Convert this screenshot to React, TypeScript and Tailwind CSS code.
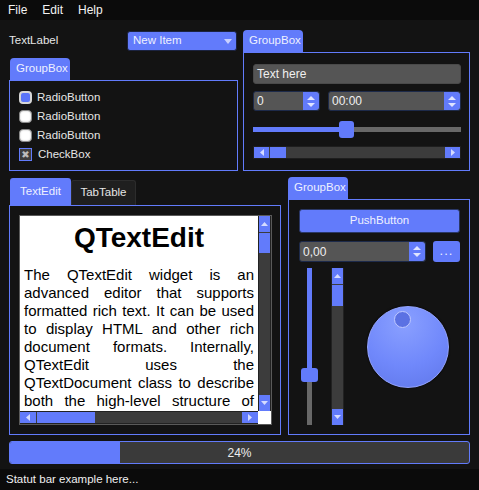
import React from "react";

type Dir = "up" | "down" | "left" | "right";

const Arrow = ({ dir, w = 8, h = 4, className = "" }: { dir: Dir; w?: number; h?: number; className?: string }) => {
  const vertical = dir === "up" || dir === "down";
  const vw = vertical ? w : h;
  const vh = vertical ? h : w;
  const pts = {
    up: `0,${vh} ${vw / 2},0 ${vw},${vh}`,
    down: `0,0 ${vw},0 ${vw / 2},${vh}`,
    left: `${vw},0 ${vw},${vh} 0,${vh / 2}`,
    right: `0,0 0,${vh} ${vw},${vh / 2}`,
  }[dir];
  return (
    <svg width={vw} height={vh} viewBox={`0 0 ${vw} ${vh}`} className={className}>
      <polygon points={pts} fill="currentColor" />
    </svg>
  );
};

const ScrollBtn = ({ dir, className = "" }: { dir: Dir; className?: string }) => (
  <div className={`bg-[#627bfb] flex items-center justify-center text-[#d5dbff] ${className}`}>
    <Arrow dir={dir} w={7} h={4} />
  </div>
);

const SpinButtons = () => (
  <div className="w-[16px] h-full bg-[#627bfb] rounded-r-[3px] flex flex-col items-center justify-center gap-[3px] text-[#dfe4ff]">
    <Arrow dir="up" w={8} h={4} />
    <Arrow dir="down" w={8} h={4} />
  </div>
);

const SpinBox = ({ value, className = "" }: { value: string; className?: string }) => (
  <div className={`flex h-full bg-[#555555] border border-[#1d2a4a] rounded-[3px] overflow-hidden ${className}`}>
    <div className="flex-1 flex items-center pl-[3px] text-[12px] text-[#f0f0f0]">{value}</div>
    <SpinButtons />
  </div>
);

const GroupTab = ({ className = "" }: { className?: string }) => (
  <div className={`h-[22px] bg-[#627bfb] rounded-t-[4px] flex items-center pl-[6px] text-[11.5px] text-[#eef0ff] ${className}`}>
    GroupBox
  </div>
);

const Radio = ({ checked }: { checked?: boolean }) =>
  checked ? (
    <div className="w-[13px] h-[13px] rounded-[4px] border-2 border-[#d6d6d6] bg-[#5a74f8]" />
  ) : (
    <div className="w-[13px] h-[13px] rounded-[4px] border border-[#8a8a8a] bg-white shadow-[inset_0_0_2px_#bbbbbb]" />
  );

const lines = [
  "The QTextEdit widget is an",
  "advanced editor that supports",
  "formatted rich text. It can be used",
  "to display HTML and other rich",
  "document formats. Internally,",
  "QTextEdit uses the",
  "QTextDocument class to describe",
  "both the high-level structure of",
];

export default function App() {
  return (
    <div className="w-[479px] h-[490px] bg-[#131313] text-[#e6e6e6] font-['Liberation_Sans',Arial,sans-serif] text-[11.5px] flex flex-col overflow-hidden">
      {/* menu bar */}
      <div className="h-[20px] bg-[#0b0b0b] flex items-center gap-[15px] pl-[8px] text-[12px] text-[#f2f2f2]">
        <span>File</span>
        <span>Edit</span>
        <span>Help</span>
      </div>

      <div className="flex-1 flex flex-col px-[9px] pt-[10px]">
        {/* top section */}
        <div className="flex gap-[5px] h-[141px]">
          <div className="w-[229px] flex flex-col">
            <div className="h-[20px] mt-[1px] flex items-center justify-between pr-[1px]">
              <span>TextLabel</span>
              <div className="w-[110px] h-full bg-[#627bfb] border border-[#1b2340] rounded-[3px] flex items-center justify-between pl-[5px] pr-[4px] text-[#eef0ff]">
                <span>New Item</span>
                <Arrow dir="down" w={8} h={5} className="text-[#c9d1ff]" />
              </div>
            </div>
            <GroupTab className="mt-[7px] ml-[1px] w-[60px]" />
            <div className="h-[91px] border border-[#627bfb] pt-[7px] pl-[9px] flex flex-col">
              {[true, false, false].map((c, i) => (
                <div key={i} className="h-[19px] flex items-center gap-[5px]">
                  <Radio checked={c} />
                  <span>RadioButton</span>
                </div>
              ))}
              <div className="h-[19px] flex items-center gap-[6px]">
                <div className="w-[13px] h-[13px] border border-[#627bfb] bg-[#3d3d3d] flex items-center justify-center text-[#bdbdbd] text-[10px] leading-none font-['DejaVu_Sans',sans-serif]">
                  ✖
                </div>
                <span>CheckBox</span>
              </div>
            </div>
          </div>

          <div className="w-[227px] flex flex-col">
            <GroupTab className="w-[60px]" />
            <div className="h-[119px] border border-[#627bfb] pt-[11px] pl-[9px] pr-[8px] flex flex-col">
              <div className="h-[20px] bg-[#555555] border border-[#4a4a4a] rounded-[3px] flex items-center pl-[3px] text-[12px] text-[#f0f0f0]">
                Text here
              </div>
              <div className="h-[20px] mt-[7px] flex gap-[8px]">
                <SpinBox value="0" className="w-[67px]" />
                <SpinBox value="00:00" className="w-[133px]" />
              </div>
              <div className="relative h-[17px] mt-[10px] flex items-center">
                <div className="h-[5px] flex-1 flex">
                  <div className="w-[93px] bg-[#627bfb]" />
                  <div className="flex-1 bg-[#686868]" />
                </div>
                <div className="absolute left-[86px] top-0 w-[15px] h-[17px] rounded-[3px] bg-[#627bfb]" />
              </div>
              <div className="h-[13px] mt-[8px] flex bg-[#3c3c3c] border border-[#1e1e1e]">
                <ScrollBtn dir="left" className="w-[15px]" />
                <div className="flex-1 pl-[1px] flex">
                  <div className="w-[16px] bg-[#627bfb]" />
                </div>
                <ScrollBtn dir="right" className="w-[15px]" />
              </div>
            </div>
          </div>
        </div>

        {/* bottom section */}
        <div className="flex gap-[7px] h-[258px] mt-[6px]">
          <div className="w-[272px] flex flex-col pt-[1px]">
            <div className="h-[27px] flex items-end pl-[1px]">
              <div className="w-[61px] h-[27px] bg-[#627bfb] rounded-t-[3px] flex items-center justify-center text-[#eef0ff]">
                TextEdit
              </div>
              <div className="w-[65px] h-[25px] bg-[#1f1f1f] border border-[#2c2c2c] border-b-0 rounded-t-[3px] flex items-center justify-center">
                TabTable
              </div>
            </div>
            <div className="h-[230px] border border-[#627bfb] pt-[9px] pl-[9px]">
              <div className="w-[253px] h-[210px] border border-[#5a5a5a] grid grid-cols-[238px_13px] grid-rows-[195px_13px] bg-white">
                <div className="overflow-hidden bg-white text-black">
                  <div className="pt-[6px] h-[38px] text-center text-[28px] leading-[32px] font-bold">QTextEdit</div>
                  <div className="mt-[12px] px-[4px] text-[15px] leading-[18px]">
                    {lines.map((l, i) => (
                      <div key={i} className="text-justify [text-align-last:justify] whitespace-nowrap">
                        {l}
                      </div>
                    ))}
                  </div>
                </div>
                <div className="flex flex-col bg-[#3c3c3c] border-x border-[#222]">
                  <ScrollBtn dir="up" className="h-[16px]" />
                  <div className="flex-1 pt-[1px] flex flex-col">
                    <div className="h-[20px] bg-[#627bfb]" />
                  </div>
                  <ScrollBtn dir="down" className="h-[16px]" />
                </div>
                <div className="flex bg-[#3c3c3c] border-y border-[#222]">
                  <ScrollBtn dir="left" className="w-[16px]" />
                  <div className="flex-1 pl-[1px] flex">
                    <div className="w-[58px] bg-[#627bfb]" />
                  </div>
                  <ScrollBtn dir="right" className="w-[16px]" />
                </div>
                <div className="bg-white" />
              </div>
            </div>
          </div>

          <div className="w-[182px] flex flex-col">
            <GroupTab className="w-[60px]" />
            <div className="h-[236px] border border-[#627bfb] pt-[9px] pl-[10px] pr-[9px] flex flex-col">
              <div className="h-[24px] bg-[#627bfb] rounded-[3px] border border-[#2a3766] flex items-center justify-center text-[#eef0ff]">
                PushButton
              </div>
              <div className="h-[21px] mt-[8px] flex">
                <SpinBox value="0,00" className="w-[127px]" />
                <div className="ml-auto w-[27px] h-full bg-[#627bfb] rounded-[3px] flex items-center justify-center text-[#eef0ff] text-[13px] tracking-[1px] pb-[2px]">
                  ...
                </div>
              </div>
              <div className="h-[157px] mt-[6px] flex items-center">
                <div className="relative w-[17px] h-full ml-[2px] flex flex-col items-center">
                  <div className="w-[5px] h-[100px] bg-[#627bfb]" />
                  <div className="w-[5px] flex-1 bg-[#686868]" />
                  <div className="absolute top-[100px] left-0 w-[17px] h-[14px] rounded-[3px] bg-[#627bfb]" />
                </div>
                <div className="w-[13px] h-full ml-[13px] flex flex-col bg-[#3c3c3c] border-x border-[#222]">
                  <ScrollBtn dir="up" className="h-[16px]" />
                  <div className="flex-1 pt-[1px] flex flex-col">
                    <div className="h-[21px] bg-[#627bfb]" />
                  </div>
                  <ScrollBtn dir="down" className="h-[16px]" />
                </div>
                <div className="relative ml-[23px] w-[82px] h-[82px] rounded-full border border-[#93a3ff] bg-[radial-gradient(circle_at_45%_20%,#8aa0ff,#7088fb_55%,#5f76e8)] shadow-[0_0_2px_#000]">
                  <div className="absolute left-[26px] top-[4px] w-[17px] h-[17px] rounded-full border border-[#c0c9ff] bg-[#5b71e3]" />
                </div>
              </div>
            </div>
          </div>
        </div>

        {/* progress */}
        <div className="relative h-[23px] mt-[6px] border border-[#627bfb] rounded-[3px] bg-[#3a3a3a] overflow-hidden">
          <div className="h-full w-[24%] bg-[#627bfb]" />
          <div className="absolute inset-0 flex items-center justify-center text-[12px] text-[#eeeeee]">24%</div>
        </div>
      </div>

      {/* status bar */}
      <div className="h-[21px] bg-[#0b0b0b] flex items-center pl-[6px] text-[#f0f0f0]">
        Statut bar example here...
      </div>
    </div>
  );
}
